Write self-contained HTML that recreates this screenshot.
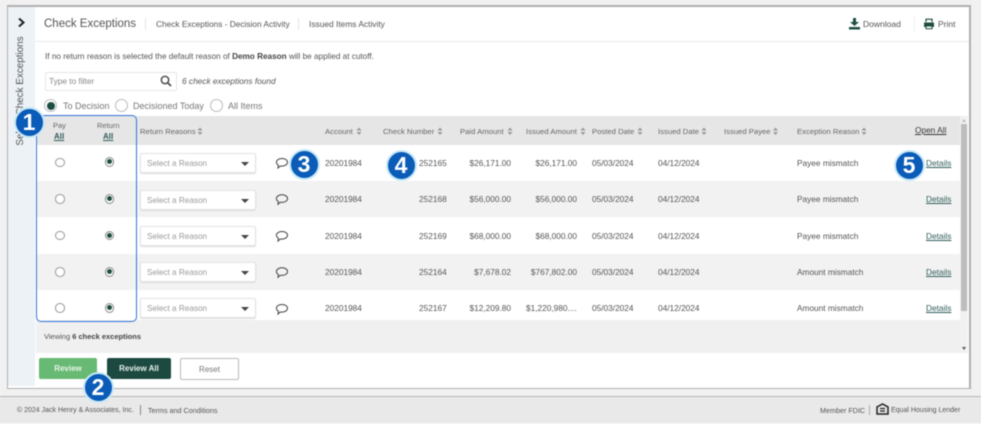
<!DOCTYPE html>
<html><head><meta charset="utf-8">
<style>
html,body{margin:0;padding:0;width:981px;height:424px;overflow:hidden;background:#f1f1f1;font-family:"Liberation Sans",sans-serif;color:#555;}
.a{position:absolute;white-space:nowrap;font-size:8.3px;line-height:11px;}
.b{position:absolute;}
#w{position:relative;width:981px;height:424px;filter:blur(0.4px);}
.h{color:#666;font-size:7.7px;}
.sel{position:absolute;left:140px;width:114px;height:18px;background:#fff;border:1px solid #e2e2e2;border-radius:2px;box-shadow:0 1px 1px #ddd;}
.sel span{position:absolute;left:6px;top:4px;font-size:8.2px;line-height:12px;color:#999;white-space:nowrap;}
.sel b{position:absolute;right:6px;top:8px;width:0;height:0;border-left:4px solid transparent;border-right:4px solid transparent;border-top:4px solid #444;}
.r{position:absolute;width:7.500px;height:7.500px;border:1px solid #999;border-radius:50%;background:#fff;}
.g{position:absolute;width:7.500px;height:7.500px;border:1px solid #888;border-radius:50%;background:#fff;}
.g:after{content:"";position:absolute;left:1.250px;top:1.250px;width:5px;height:5px;border-radius:50%;background:#1e4d42;}
.n{position:absolute;width:27px;height:27px;border-radius:50%;background:#0a5cb8;border:2px solid #c7e9f7;color:#fff;font:bold 23px/27px "Liberation Sans",sans-serif;text-align:center;}
.t{text-align:right;}
.l{text-decoration:underline;color:#2f5d5a;}
</style></head><body><div id="w">
<div class="b" style="left:7px;top:5px;width:961px;height:381px;background:#fff;border:1px solid #b0b0b0;border-right-width:2px;border-top-width:2px"></div>
<div class="b" style="left:8px;top:7px;width:27px;height:379px;background:#edf2f7"></div>
<svg class="b" style="left:17px;top:17px" width="9" height="11" viewBox="0 0 9 11"><path d="M2 1.500L6.500 5.500L2 9.500" fill="none" stroke="#222" stroke-width="2"/></svg>
<div class="a" style="left:-37px;top:83.500px;width:116px;height:14px;transform:rotate(-90deg);font-size:9.900px;line-height:14px;color:#555;text-align:center">Select Check Exceptions</div>

<div class="a" style="left:44px;top:16px;font-size:11.500px;line-height:16px;color:#555">Check Exceptions</div>
<div class="b" style="left:145px;top:18px;width:1px;height:12px;background:#e3e3e3"></div>
<div class="a" style="left:156px;top:19px;font-size:8.300px;color:#555">Check Exceptions - Decision Activity</div>
<div class="b" style="left:298px;top:18px;width:1px;height:12px;background:#e3e3e3"></div>
<div class="a" style="left:309px;top:19px;font-size:8.400px;color:#555">Issued Items Activity</div>
<div class="b" style="left:35px;top:41px;width:934px;height:1px;background:#eaeaea"></div>

<svg class="b" style="left:848px;top:18px" width="13" height="12" viewBox="0 0 13 12"><path d="M5 0H8V4H11L6.500 8L2 4H5Z" fill="#1e4d42"/><path d="M1 9H12V11.500H1Z" fill="#1e4d42"/></svg>
<div class="a" style="left:863px;top:19px;font-size:8.500px">Download</div>
<div class="b" style="left:914px;top:17px;width:1px;height:14px;background:#eee"></div>
<svg class="b" style="left:923px;top:18px" width="12" height="12" viewBox="0 0 12 12"><path d="M3 4V1.200H9V4" fill="none" stroke="#1e4d42" stroke-width="1.200"/><path d="M1 4.500H11V9H9.500V7.500H2.500V9H1Z" fill="#1e4d42"/><path d="M3 8H9V10.700H3Z" fill="none" stroke="#1e4d42"/></svg>
<div class="a" style="left:938px;top:19px;font-size:8.500px">Print</div>

<div class="a" style="left:45px;top:51px;font-size:8.200px">If no return reason is selected the default reason of <b style="color:#444">Demo Reason</b> will be applied at cutoff.</div>

<div class="b" style="left:45px;top:72px;width:130px;height:17px;border:1px solid #e6e6e6;border-radius:2px;background:#fff"></div>
<div class="a" style="left:49px;top:76px;font-size:8.300px;color:#888">Type to filter</div>
<svg class="b" style="left:160px;top:75px" width="12" height="12" viewBox="0 0 12 12"><circle cx="5" cy="5" r="3.700" fill="none" stroke="#444" stroke-width="1.400"/><path d="M7.800 7.800L11 11" stroke="#444" stroke-width="1.600"/></svg>
<div class="a" style="left:182px;top:76px;font-size:8.300px;font-style:italic">6 check exceptions found</div>

<div class="b" style="left:44px;top:99px;width:11px;height:11px;border:1px solid #bbb;border-radius:50%;background:#fff"></div>
<div class="b" style="left:46.500px;top:101.500px;width:8px;height:8px;border-radius:50%;background:#1e4d42"></div>
<div class="a" style="left:63px;top:100px;font-size:9px;line-height:12px;color:#777">To Decision</div>
<div class="b" style="left:115px;top:99px;width:11px;height:11px;border:1px solid #bbb;border-radius:50%;background:#fff"></div>
<div class="a" style="left:133px;top:100px;font-size:9px;line-height:12px;color:#777">Decisioned Today</div>
<div class="b" style="left:210px;top:99px;width:11px;height:11px;border:1px solid #bbb;border-radius:50%;background:#fff"></div>
<div class="a" style="left:228px;top:100px;font-size:9px;line-height:12px;color:#777">All Items</div>

<!-- table bands -->
<div class="b" style="left:36px;top:116px;width:924px;height:29px;background:#e6e6e6"></div>
<div class="b" style="left:36px;top:181px;width:924px;height:36px;background:#f2f2f2"></div>
<div class="b" style="left:36px;top:254px;width:924px;height:36px;background:#f2f2f2"></div>
<div class="b" style="left:36px;top:320px;width:924px;height:33px;background:#f0f0f0"></div>
<!-- scrollbar -->
<div class="b" style="left:960px;top:116px;width:8px;height:237px;background:#f1f1f1"></div>
<div class="b" style="left:961px;top:124px;width:6px;height:187px;background:#bdbdbd"></div>
<div class="b" style="left:962px;top:119px;width:0;height:0;border-left:2px solid transparent;border-right:2px solid transparent;border-bottom:3px solid #bbb"></div>
<div class="b" style="left:962px;top:347px;width:0;height:0;border-left:2px solid transparent;border-right:2px solid transparent;border-top:3px solid #555"></div>

<!-- headers -->
<div class="a h" style="left:53px;top:120px;font-size:7.500px">Pay</div>
<div class="a l" style="left:54px;top:131px;font-size:8px;font-weight:bold">All</div>
<div class="a h" style="left:97px;top:120px;font-size:7.500px">Return</div>
<div class="a l" style="left:103px;top:131px;font-size:8px;font-weight:bold">All</div>

<div class="a h" style="left:140px;top:126px">Return Reasons</div>
<div class="a h" style="left:325px;top:126px">Account</div>
<div class="a h" style="left:383px;top:126px">Check Number</div>
<div class="a h" style="left:460px;top:126px">Paid Amount</div>
<div class="a h" style="left:526px;top:126px">Issued Amount</div>
<div class="a h" style="left:592px;top:126px">Posted Date</div>
<div class="a h" style="left:658px;top:126px">Issued Date</div>
<div class="a h" style="left:724px;top:126px">Issued Payee</div>
<div class="a h" style="left:797px;top:126px">Exception Reason</div>
<div class="a l" style="left:915px;top:125px;font-size:8.300px;color:#333">Open All</div>
<svg class="b" style="left:0;top:0" width="981" height="424"><g fill="#999">
<path d="M197.500 130.500l2.500-3 2.500 3zM197.500 132l2.500 3 2.500-3z"/>
<path d="M356.500 130.500l2.500-3 2.500 3zM356.500 132l2.500 3 2.500-3z"/>
<path d="M437.500 130.500l2.500-3 2.500 3zM437.500 132l2.500 3 2.500-3z"/>
<path d="M507.500 130.500l2.500-3 2.500 3zM507.500 132l2.500 3 2.500-3z"/>
<path d="M580.500 130.500l2.500-3 2.500 3zM580.500 132l2.500 3 2.500-3z"/>
<path d="M637.500 130.500l2.500-3 2.500 3zM637.500 132l2.500 3 2.500-3z"/>
<path d="M701.500 130.500l2.500-3 2.500 3zM701.500 132l2.500 3 2.500-3z"/>
<path d="M773 130.500l2.500-3 2.500 3zM773 132l2.500 3 2.500-3z"/>
<path d="M861.500 130.500l2.500-3 2.500 3zM861.500 132l2.500 3 2.500-3z"/>
</g></svg>

<!-- rows -->
<div class="r" style="left:55px;top:157.500px"></div><div class="g" style="left:104.500px;top:157px"></div>
<div class="sel" style="top:153px"><span>Select a Reason</span><b></b></div>
<div class="a" style="left:325px;top:158px">20201984</div><div class="a" style="left:419px;top:158px">252165</div>
<div class="a t" style="left:460px;top:158px;width:51px">$26,171.00</div><div class="a t" style="left:526px;top:158px;width:51px">$26,171.00</div>
<div class="a" style="left:592px;top:158px">05/03/2024</div><div class="a" style="left:658px;top:158px">04/12/2024</div>
<div class="a" style="left:797px;top:158px">Payee mismatch</div><div class="a l" style="left:926px;top:158px">Details</div>

<div class="r" style="left:55px;top:194px"></div><div class="g" style="left:104.500px;top:194px"></div>
<div class="sel" style="top:189.500px"><span>Select a Reason</span><b></b></div>
<div class="a" style="left:325px;top:194px">20201984</div><div class="a" style="left:419px;top:194px">252168</div>
<div class="a t" style="left:460px;top:194px;width:51px">$56,000.00</div><div class="a t" style="left:526px;top:194px;width:51px">$56,000.00</div>
<div class="a" style="left:592px;top:194px">05/03/2024</div><div class="a" style="left:658px;top:194px">04/12/2024</div>
<div class="a" style="left:797px;top:194px">Payee mismatch</div><div class="a l" style="left:926px;top:194px">Details</div>

<div class="r" style="left:55px;top:230.500px"></div><div class="g" style="left:104.500px;top:230.500px"></div>
<div class="sel" style="top:226px"><span>Select a Reason</span><b></b></div>
<div class="a" style="left:325px;top:231px">20201984</div><div class="a" style="left:419px;top:231px">252169</div>
<div class="a t" style="left:460px;top:231px;width:51px">$68,000.00</div><div class="a t" style="left:526px;top:231px;width:51px">$68,000.00</div>
<div class="a" style="left:592px;top:231px">05/03/2024</div><div class="a" style="left:658px;top:231px">04/12/2024</div>
<div class="a" style="left:797px;top:231px">Payee mismatch</div><div class="a l" style="left:926px;top:231px">Details</div>

<div class="r" style="left:55px;top:267px"></div><div class="g" style="left:104.500px;top:267px"></div>
<div class="sel" style="top:262px"><span>Select a Reason</span><b></b></div>
<div class="a" style="left:325px;top:267px">20201984</div><div class="a" style="left:419px;top:267px">252164</div>
<div class="a t" style="left:460px;top:267px;width:51px">$7,678.02</div><div class="a t" style="left:526px;top:267px;width:51px">$767,802.00</div>
<div class="a" style="left:592px;top:267px">05/03/2024</div><div class="a" style="left:658px;top:267px">04/12/2024</div>
<div class="a" style="left:797px;top:267px">Amount mismatch</div><div class="a l" style="left:926px;top:267px">Details</div>

<div class="r" style="left:55px;top:303px"></div><div class="g" style="left:104.500px;top:303px"></div>
<div class="sel" style="top:298px"><span>Select a Reason</span><b></b></div>
<div class="a" style="left:325px;top:303px">20201984</div><div class="a" style="left:419px;top:303px">252167</div>
<div class="a t" style="left:460px;top:303px;width:51px">$12,209.80</div><div class="a" style="left:526px;top:303px">$1,220,980....</div>
<div class="a" style="left:592px;top:303px">05/03/2024</div><div class="a" style="left:658px;top:303px">04/12/2024</div>
<div class="a" style="left:797px;top:303px">Amount mismatch</div><div class="a l" style="left:926px;top:303px">Details</div>

<svg class="b" style="left:0;top:0" width="981" height="424"><g fill="none" stroke="#444" stroke-width="1">
<path d="M282 158.500c3.300 0 5.500 1.800 5.500 3.800s-2.200 3.800-5.500 3.800c-.6 0-1.100 0-1.600-.1l-2.400 2 .4-2.800c-1.200-.7-2-1.700-2-2.900 0-2 2.300-3.800 5.600-3.800z"/>
<path d="M282 194.800c3.300 0 5.500 1.800 5.500 3.800s-2.200 3.800-5.500 3.800c-.6 0-1.100 0-1.600-.1l-2.400 2 .4-2.800c-1.200-.7-2-1.700-2-2.900 0-2 2.300-3.800 5.600-3.800z"/>
<path d="M282 231.500c3.300 0 5.500 1.800 5.500 3.800s-2.200 3.800-5.500 3.800c-.6 0-1.100 0-1.600-.1l-2.400 2 .4-2.800c-1.200-.7-2-1.700-2-2.900 0-2 2.300-3.800 5.600-3.800z"/>
<path d="M282 267.800c3.300 0 5.500 1.800 5.500 3.800s-2.200 3.800-5.500 3.800c-.6 0-1.100 0-1.600-.1l-2.400 2 .4-2.800c-1.200-.7-2-1.700-2-2.900 0-2 2.300-3.800 5.600-3.800z"/>
<path d="M282 304.500c3.300 0 5.500 1.800 5.500 3.800s-2.200 3.800-5.500 3.800c-.6 0-1.100 0-1.600-.1l-2.400 2 .4-2.800c-1.200-.7-2-1.700-2-2.900 0-2 2.300-3.800 5.600-3.800z"/>
</g></svg>

<div class="a" style="left:44px;top:331px;font-size:7.500px">Viewing <b style="color:#444">6 check exceptions</b></div>

<!-- buttons -->
<div class="b" style="left:39px;top:358px;width:58px;height:21px;background:#68b973;border-radius:2px;color:#e8f5ea;font:bold 8px/21px 'Liberation Sans',sans-serif;text-align:center">Review</div>
<div class="b" style="left:107px;top:358px;width:64px;height:21px;background:#1d4a40;border-radius:2px;color:#e8f0ee;font:bold 8px/21px 'Liberation Sans',sans-serif;text-align:center">Review All</div>
<div class="b" style="left:180px;top:358px;width:57px;height:20px;background:#fff;border:1px solid #bbb;border-radius:2px;color:#777;font:8px/21px 'Liberation Sans',sans-serif;text-align:center">Reset</div>

<!-- highlight box -->
<div class="b" style="left:36px;top:115px;width:99px;height:205px;border:1px solid #2f74d6;border-radius:5px"></div>

<!-- footer -->
<div class="b" style="left:0;top:396px;width:981px;height:1px;background:#b5b5b5"></div>
<div class="b" style="left:0;top:397px;width:981px;height:26px;background:#e9e9e9"></div>
<div class="b" style="left:0;top:423px;width:981px;height:1px;background:#fafafa"></div>
<div class="a" style="left:17px;top:405px;font-size:7px">© 2024 Jack Henry &amp; Associates, Inc.</div>
<div class="b" style="left:140px;top:405px;width:1px;height:10px;background:#888"></div>
<div class="a" style="left:148px;top:405px;font-size:7.200px">Terms and Conditions</div>
<div class="a" style="left:820px;top:405px;font-size:7.200px">Member FDIC</div>
<div class="b" style="left:869px;top:405px;width:1px;height:10px;background:#aaa"></div>
<svg class="b" style="left:876px;top:403px" width="13" height="12" viewBox="0 0 13 12"><path d="M6.500 1L1 4V11H12V4Z" fill="none" stroke="#222" stroke-width="1.500"/><path d="M4 5.500H9M4 8H9" stroke="#222" stroke-width="1.200"/></svg>
<div class="a" style="left:891px;top:405px;font-size:7px">Equal Housing Lender</div>

<!-- numbers -->
<div class="n" style="left:13.500px;top:106.500px">1</div>
<div class="n" style="left:82.500px;top:371.500px">2</div>
<div class="n" style="left:288.500px;top:148.500px">3</div>
<div class="n" style="left:385.500px;top:149.500px">4</div>
<div class="n" style="left:893.500px;top:149.500px">5</div>
</div></body></html>
